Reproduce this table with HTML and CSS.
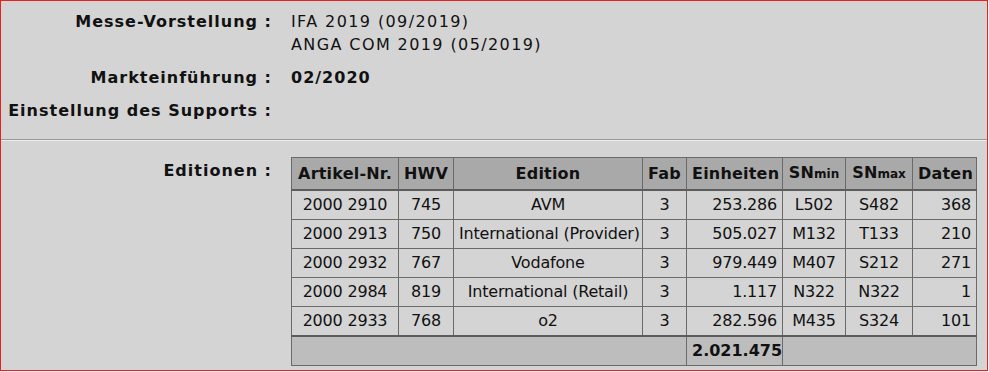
FILE: index.html
```html
<!DOCTYPE html>
<html lang="de">
<head>
    <meta charset="UTF-8">
    <title>Produktdaten</title>
    <link rel="stylesheet" href="styles.css">
</head>
<body>
<div class="frame">
    <div class="info">
        <div class="label">Messe-Vorstellung :</div>
        <div class="value">IFA 2019 (09/2019)<br>ANGA COM 2019 (05/2019)</div>
        <div class="label">Markteinführung :</div>
        <div class="value bold">02/2020</div>
        <div class="label">Einstellung des Supports :</div>
        <div class="value"></div>
    </div>
    <div class="info editions">
        <div class="label">Editionen :</div>
        <div class="value">
            <table class="ed">
                <colgroup>
                    <col style="width:107px">
                    <col style="width:55px">
                    <col style="width:189px">
                    <col style="width:44px">
                    <col style="width:96px">
                    <col style="width:63px">
                    <col style="width:67px">
                    <col style="width:64px">
                </colgroup>
                <thead>
                    <tr>
                        <th>Artikel-Nr.</th>
                        <th>HWV</th>
                        <th>Edition</th>
                        <th>Fab</th>
                        <th>Einheiten</th>
                        <th>SN<small>min</small></th>
                        <th>SN<small>max</small></th>
                        <th>Daten</th>
                    </tr>
                </thead>
                <tbody>
                    <tr><td>2000 2910</td><td>745</td><td>AVM</td><td>3</td><td class="r">253.286</td><td>L502</td><td>S482</td><td class="r">368</td></tr>
                    <tr><td>2000 2913</td><td>750</td><td>International (Provider)</td><td>3</td><td class="r">505.027</td><td>M132</td><td>T133</td><td class="r">210</td></tr>
                    <tr><td>2000 2932</td><td>767</td><td>Vodafone</td><td>3</td><td class="r">979.449</td><td>M407</td><td>S212</td><td class="r">271</td></tr>
                    <tr><td>2000 2984</td><td>819</td><td>International (Retail)</td><td>3</td><td class="r">1.117</td><td>N322</td><td>N322</td><td class="r">1</td></tr>
                    <tr><td>2000 2933</td><td>768</td><td>o2</td><td>3</td><td class="r">282.596</td><td>M435</td><td>S324</td><td class="r">101</td></tr>
                </tbody>
                <tfoot>
                    <tr><td colspan="4"></td><td class="r bold">2.021.475</td><td colspan="3"></td></tr>
                </tfoot>
            </table>
        </div>
    </div>
</div>
</body>
</html>
```

FILE: styles.css
```css
* {
    margin: 0;
    padding: 0;
    box-sizing: border-box;
}
body {
    background: #f4f4f4;
    font-family: "DejaVu Sans", Verdana, sans-serif;
    font-size: 16px;
    color: #111;
}
.frame {
    width: 988px;
    height: 371px;
    border: 1px solid #e8201e;
    background: #d4d4d4;
}
.info {
    display: grid;
    grid-template-columns: 271px 1fr;
    column-gap: 19px;
    padding: 4px 0 12px;
}
.label {
    font-weight: bold;
    text-align: right;
    line-height: 23px;
    padding: 5px 0;
    white-space: nowrap;
    letter-spacing: 1px;
}
.value {
    line-height: 23px;
    padding: 5px 0;
    letter-spacing: 1.4px;
}
.value.bold {
    letter-spacing: 1px;
}
.bold {
    font-weight: bold;
}
.editions {
    border-top: 1px solid #9a9a9a;
    box-shadow: inset 0 1px 0 #ececec;
    padding: 12px 0 0;
}
.editions .label {
    padding-top: 7px;
}
.editions .value {
    letter-spacing: 0;
}
.ed {
    border-collapse: collapse;
    table-layout: fixed;
    width: 685px;
    border: 1px solid #6a6a6a;
}
.ed th,
.ed td {
    border: 1px solid #6a6a6a;
    text-align: center;
    white-space: nowrap;
    padding: 4px 5px;
    line-height: 20px;
}
.ed td {
    letter-spacing: -0.2px;
}
.ed th {
    background: #a9a9a9;
    line-height: 22px;
    border-bottom: 2px solid #5c5c5c;
    letter-spacing: 0.2px;
}
.ed th small {
    font-size: 12px;
    letter-spacing: 0;
}
.ed .r {
    text-align: right;
}
.ed tfoot td {
    background: #bdbdbd;
    border-top: 2px solid #5c5c5c;
    letter-spacing: 0;
}
```
